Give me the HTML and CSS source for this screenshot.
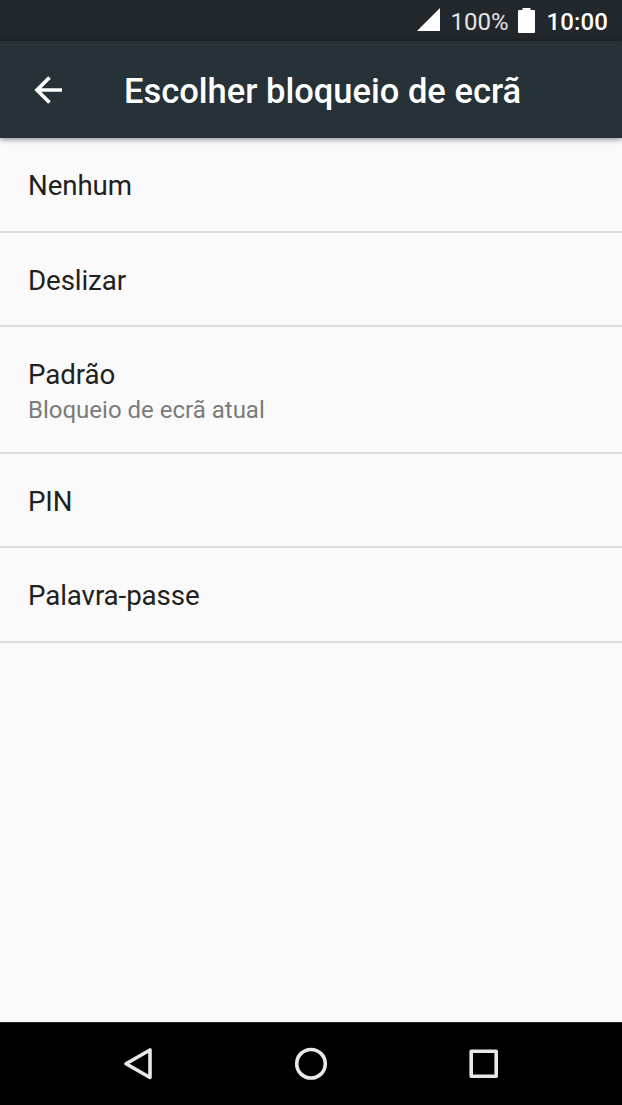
FILE: index.html
```html
<!DOCTYPE html>
<html lang="pt">
<head>
<meta charset="UTF-8">
<meta name="viewport" content="width=device-width, initial-scale=1.0"/>
<title>Escolher bloqueio de ecrã</title>
<link rel="stylesheet" href="styles.css">
</head>
<body>

<div class="status">
<svg class="signal" viewBox="0 0 24 24"><path d="M0 24L24 0v24z"/></svg>
<span class="percent">100%</span>
<svg class="battery" viewBox="0 0 17 25"><path d="M4.500 0h8v2H16q1 0 1 1v21q0 1-1 1H1q-1 0-1-1V3q0-1 1-1h3.500z"/></svg>
<span class="clock">10:00</span>
</div>

<header class="toolbar">
<svg class="back" viewBox="0 0 28 28"><path d="M28 14H3M15.500 1.500L3 14l12.500 12.500"/></svg>
<h1>Escolher bloqueio de ecrã</h1>
</header>

<ul class="list">
<li>Nenhum</li>
<li>Deslizar</li>
<li class="current">Padrão<small>Bloqueio de ecrã atual</small></li>
<li>PIN</li>
<li>Palavra-passe</li>
</ul>

<nav class="navbar">
<svg viewBox="0 0 36 36"><path d="M30 4v27.500L6 17.750z"/></svg>
<svg viewBox="0 0 36 36"><circle cx="18" cy="17.750" r="14.300"/></svg>
<svg viewBox="0 0 36 36"><rect x="5.200" y="5.200" width="25" height="25"/></svg>
</nav>

</body>
</html>
```

FILE: styles.css
```css
*{
box-sizing: border-box;
margin: 0; padding: 0;
}

body{
height: 100vh;
display: flex;
flex-direction: column;
background: #fafafa;
color: #212121;
font-family: Roboto, sans-serif;
overflow: hidden;
}

.status{
height: 41px;
flex: none;
display: flex;
align-items: center;
justify-content: flex-end;
padding-right: 14px;
background: #21272b;
color: #fff;
font-size: 24px;
}

.status span{
padding-top: 2px;
}

.status svg{
fill: #fff;
}

.signal{
width: 23px; height: 23px;
margin: 0 11px 2px 0;
}

.percent{
color: #e4e5e6;
margin-right: 9px;
}

.battery{
width: 17px; height: 25px;
margin-right: 12px;
}

.clock{
font-weight: 500;
letter-spacing: .1px;
}

.toolbar{
height: 97px;
flex: none;
display: flex;
align-items: center;
padding-left: 34px;
background: #263238;
color: #fff;
box-shadow: 0 1px 6px rgba(0,0,0,.5);
}

.back{
width: 28px; height: 28px;
margin-right: 62px;
fill: none;
stroke: #fff;
stroke-width: 3.7;
}

h1{
padding-top: 2px;
font-size: 34.5px;
font-weight: 500;
}

.list{
flex: 1;
list-style: none;
font-size: 27.7px;
letter-spacing: -.1px;
}

.list li{
height: 94px;
display: flex;
flex-direction: column;
padding: 31px 0 0 28px;
border-bottom: 2px solid #dedede;
line-height: 33px;
}

.list li:first-child{
height: 95px;
}

.list .current{
height: 127px;
}

.list li:last-child{
height: 95px;
}

small{
margin-top: 3px;
font-size: 24px;
letter-spacing: 0;
color: #7b7b7b;
}

.navbar{
height: 83px;
flex: none;
display: flex;
align-items: center;
justify-content: center;
gap: 137px;
border-top: 1px solid #222;
background: #000;
}

.navbar svg{
width: 36px; height: 36px;
fill: none;
stroke: #e8e8e8;
stroke-width: 3.6;
stroke-linejoin: round;
}
```
